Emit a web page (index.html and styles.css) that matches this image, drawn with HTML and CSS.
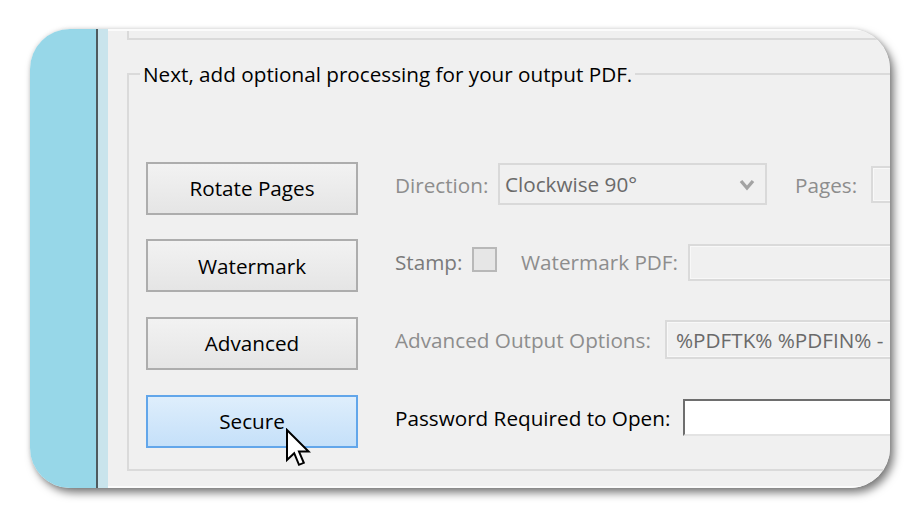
FILE: index.html
```html
<!DOCTYPE html>
<html>
<head>
<meta charset="utf-8">
<link rel="stylesheet" href="styles.css">
</head>
<body>
<div class="frame">
  <div class="side"></div>
  <div class="edge-dark"></div>
  <div class="edge-light"></div>
  <div class="window">
    <div class="prev-group"></div>
    <fieldset class="group">
      <legend>Next, add optional processing for your output PDF.</legend>
      <div class="rows">
        <div class="row">
          <button class="btn">Rotate Pages</button>
          <div class="opts">
            <span class="lbl disabled w-dir">Direction:</span>
            <div class="select">
              <span class="select-text">Clockwise 90°</span>
              <svg class="chev" width="16" height="12" viewBox="0 0 16 12"><polyline points="2,2 8,9 14,2" fill="none" stroke="#a3a3a3" stroke-width="3.4"/></svg>
            </div>
            <span class="lbl disabled w-pages">Pages:</span>
            <div class="field field-pages"></div>
          </div>
        </div>
        <div class="row">
          <button class="btn">Watermark</button>
          <div class="opts">
            <span class="lbl stamp w-stamp">Stamp:</span>
            <span class="check"></span>
            <span class="lbl disabled w-wm">Watermark PDF:</span>
            <div class="field field-wm"></div>
          </div>
        </div>
        <div class="row">
          <button class="btn">Advanced</button>
          <div class="opts">
            <span class="lbl disabled w-adv">Advanced Output Options:</span>
            <div class="field field-adv"><span class="field-text">%PDFTK% %PDFIN% -</span></div>
          </div>
        </div>
        <div class="row">
          <button class="btn btn-hover">Secure
            <svg class="cursor" width="26" height="40" viewBox="0 0 13 20"><path d="M1,1 L1,16 L4.6,12.6 L7,18.4 L9.4,17.4 L7,11.8 L11.8,11.8 Z" fill="#fff" stroke="#000" stroke-width="1" stroke-linejoin="miter"/></svg>
          </button>
          <div class="opts">
            <span class="lbl w-pw">Password Required to Open:</span>
            <div class="field field-pw"></div>
          </div>
        </div>
      </div>
    </fieldset>
  </div>
</div>
</body>
</html>
```
FILE: styles.css
```css
html, body {
  margin: 0;
  padding: 0;
  background: #ffffff;
  width: 920px;
  height: 520px;
  overflow: hidden;
}
body {
  font-family: "Open Sans", "Noto Sans", sans-serif;
  font-size: 20.7px;
  color: #000;
}
.frame {
  margin: 29px 0 0 30px;
  width: 860px;
  height: 459px;
  border-radius: 40px;
  overflow: hidden;
  display: flex;
  box-shadow: 4px 5px 9px rgba(0,0,0,0.5), 0 0 4px rgba(0,0,0,0.12);
}
.side {
  width: 66px;
  flex: none;
  background: #97d7e8;
}
.edge-dark {
  width: 2px;
  flex: none;
  background: #4e5a5e;
}
.edge-light {
  width: 10px;
  flex: none;
  background: #c9e4ec;
}
.window {
  flex: 1;
  min-width: 0;
  background: #f0f0f0;
  border-top: 2px solid #fbfbfb;
  border-bottom: 2px solid #fbfbfb;
  padding-left: 19px;
  overflow: hidden;
}
.prev-group {
  width: 900px;
  height: 7px;
  border-left: 2px solid #dadada;
  border-bottom: 2px solid #dadada;
}
.group {
  margin: 22px 0 0 0;
  width: 900px;
  min-width: 0;
  border: 2px solid #dadada;
  padding: 0 0 22px 11px;
  box-sizing: border-box;
}
.group legend {
  padding: 0 3px;
  line-height: 24px;
  font-size: 20.7px;
}
.rows {
  margin-top: 76px;
  display: flex;
  flex-direction: column;
  gap: 25.7px;
}
.row {
  display: flex;
  align-items: center;
  height: 52px;
}
.btn {
  position: relative;
  flex: none;
  margin-left: 6px;
  width: 212px;
  height: 53px;
  border: 2px solid #adadad;
  background: linear-gradient(#f2f2f2, #e5e5e5);
  font-family: inherit;
  font-size: 20.7px;
  color: #000;
  padding: 0;
  line-height: 24px;
}
.btn-hover {
  border-color: #62a6ea;
  background: linear-gradient(#deeefc, #c5e0f9);
}
.cursor {
  position: absolute;
  left: 137px;
  top: 31px;
}
.opts {
  display: flex;
  align-items: center;
  margin-left: 37px;
  padding-bottom: 7px;
  height: 52px;
  box-sizing: border-box;
}
.lbl {
  flex: none;
  white-space: nowrap;
  line-height: 24px;
}
.disabled {
  color: #8d8d8d;
}
.stamp {
  color: #7a7a7a;
}
.w-dir { width: 103px; }
.w-pages { width: 76px; margin-left: 28px; }
.w-stamp { width: 77px; }
.w-wm { width: 167px; margin-left: 24px; }
.w-adv { width: 270px; }
.w-pw { width: 288px; }
.select {
  flex: none;
  width: 269px;
  height: 42px;
  box-sizing: border-box;
  border: 2px solid #d9d9d9;
  background: #f0f0f0;
  display: flex;
  align-items: center;
  justify-content: space-between;
  padding: 0 10px 0 5px;
  margin-bottom: 2px;
}
.select-text {
  color: #6a6a6a;
  line-height: 24px;
}
.chev {
  flex: none;
  margin-top: 2px;
}
.check {
  flex: none;
  width: 25px;
  height: 25px;
  box-sizing: border-box;
  border: 2px solid #b8b8b8;
  background: #e6e6e6;
  margin-bottom: 6px;
}
.field {
  flex: none;
  width: 300px;
  box-sizing: border-box;
  border: 2px solid #dadada;
  box-shadow: inset 0 0 0 1px #f8f8f8;
  background: #f0f0f0;
  display: flex;
  align-items: center;
}
.field-pages {
  height: 37px;
}
.field-wm {
  height: 37px;
}
.field-adv {
  height: 39px;
  padding-left: 9px;
}
.field-text {
  color: #6a6a6a;
  white-space: nowrap;
  line-height: 24px;
}
.field-pw {
  height: 37px;
  background: #fff;
  border-top: 2px solid #6e6e6e;
  border-left: 2px solid #6e6e6e;
  border-right: 2px solid #e3e3e3;
  border-bottom: 2px solid #e3e3e3;
  box-shadow: none;
}
```
